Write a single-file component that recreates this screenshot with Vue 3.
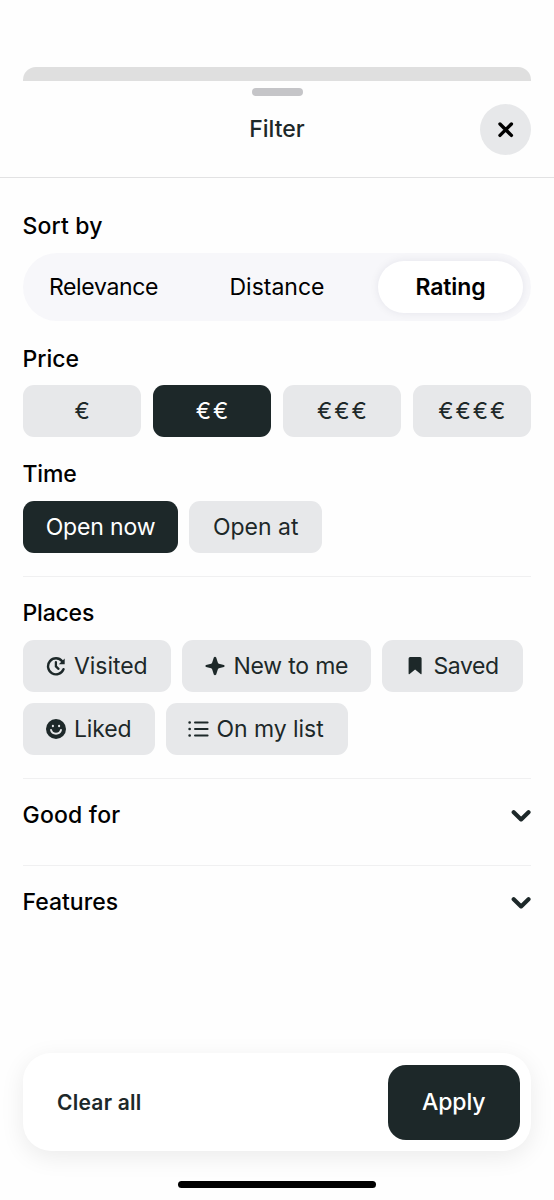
<script setup>
const sorts = [
  { label: 'Relevance', cls: 'relevance' },
  { label: 'Distance', cls: 'distance' },
  { label: 'Rating', cls: 'rating', active: true },
]
const prices = [
  { label: '€' },
  { label: '€€', active: true },
  { label: '€€€' },
  { label: '€€€€' },
]
const times = [
  { label: 'Open now', cls: 'open-now', active: true },
  { label: 'Open at', cls: 'open-at' },
]
const places = [
  { label: 'Visited', icon: 'visited' },
  { label: 'New to me', icon: 'new' },
  { label: 'Saved', icon: 'saved' },
  { label: 'Liked', icon: 'liked' },
  { label: 'On my list', icon: 'list' },
]
const groups = [
  { label: 'Good for', cls: 'good-for' },
  { label: 'Features', cls: 'features' },
]
</script>

<template>
  <div class="screen">
    <div class="behind"></div>
    <header class="header">
      <div class="grabber"></div>
      <div class="bar">
        <h1 class="title">Filter</h1>
        <button class="close" aria-label="Close">
          <svg width="20" height="20" viewBox="0 0 20 20"><path d="M4 4 15.4 15.4M15.4 4 4 15.4" fill="none" stroke="#000" stroke-width="3.4" stroke-linecap="round" /></svg>
        </button>
      </div>
    </header>

    <main class="content">
      <h2 class="heading sort-by"><span>Sort by</span></h2>
      <div class="segmented">
        <button v-for="s in sorts" :key="s.label" class="segment" :class="[s.cls, { active: s.active }]"><span>{{ s.label }}</span></button>
      </div>

      <h2 class="heading price"><span>Price</span></h2>
      <div class="prices">
        <button v-for="p in prices" :key="p.label" class="chip euro" :class="{ active: p.active }"><span>{{ p.label }}</span></button>
      </div>

      <h2 class="heading time"><span>Time</span></h2>
      <div class="chips">
        <button v-for="t in times" :key="t.label" class="chip" :class="[t.cls, { active: t.active }]"><span>{{ t.label }}</span></button>
      </div>

      <section class="places">
        <h2 class="heading"><span>Places</span></h2>
        <div class="chips">
          <button v-for="p in places" :key="p.label" class="chip with-icon" :class="p.icon">
            <svg v-if="p.icon === 'visited'" class="icon" viewBox="0 0 20 20" fill="none" stroke="currentColor">
              <path d="M16.2 5.2A8 8 0 1 0 17.5 13.2" stroke-width="2.4" stroke-linecap="round" />
              <path d="M18.7 2.4v5.8h-5.9z" fill="currentColor" stroke="none" />
              <path d="M9.9 6.2v4.2l2.6 2.4" stroke-width="2.3" stroke-linecap="round" stroke-linejoin="round" />
            </svg>
            <svg v-else-if="p.icon === 'new'" class="icon" viewBox="0 0 20 20" fill="currentColor">
              <path d="M8.8 1.5Q10 -.1 11.2 1.5L12.8 6.6Q13 7.4 13.9 7.7L18.9 9.1Q20.4 10 18.9 10.9L13.9 12.3Q13 12.6 12.8 13.4L11.2 18.5Q10 20.1 8.8 18.5L7.2 13.4Q7 12.6 6.1 12.3L1.1 10.9Q-.4 10 1.1 9.1L6.1 7.7Q7 7.4 7.2 6.6Z" />
            </svg>
            <svg v-else-if="p.icon === 'saved'" class="icon" viewBox="0 0 20 20" fill="currentColor">
              <path d="M3.6 2.5Q3.6 1 5.1 1H15.1Q16.6 1 16.6 2.5V17.6Q16.6 18.8 15.6 18L10.1 13.5 4.6 18Q3.6 18.8 3.6 17.6Z" />
            </svg>
            <svg v-else-if="p.icon === 'liked'" class="icon" viewBox="0 0 20 20">
              <circle cx="10" cy="10" r="10" fill="currentColor" />
              <g fill="none" stroke="#e7e8ea" stroke-linecap="round">
                <path d="M5 10.9C6.1 16 13.9 16 15 10.9" stroke-width="2" />
                <path d="M6.9 6.7v.6M13.1 6.7v.6" stroke-width="2.1" />
              </g>
            </svg>
            <svg v-else class="icon list-icon" viewBox="0 0 21 20" fill="none" stroke="currentColor" stroke-width="2" stroke-linecap="round">
              <path d="M7 3.5H19.6M7 10H19.6M7 16.5H19.6" />
              <path d="M1.6 3.5h.1M1.6 10h.1M1.6 16.5h.1" stroke-width="2.6" />
            </svg>
            <span>{{ p.label }}</span>
          </button>
        </div>
      </section>

      <section v-for="g in groups" :key="g.label" class="group" :class="g.cls">
        <h2 class="heading"><span>{{ g.label }}</span></h2>
        <svg class="chevron" width="20" height="14" viewBox="0 0 20 14"><path d="M2.7 3.2 10.1 10.4 17.5 3.2" fill="none" stroke="#1d2829" stroke-width="4.2" stroke-linecap="round" stroke-linejoin="round" /></svg>
      </section>
    </main>

    <footer class="footer">
      <div class="actions">
        <button class="clear">Clear all</button>
        <button class="apply">Apply</button>
      </div>
      <div class="home"></div>
    </footer>
  </div>
</template>

<style>
body { margin: 0; background: #fff; }
</style>

<style scoped>
* { box-sizing: border-box; }
.screen {
  height: 1200px;
  display: flex;
  flex-direction: column;
  background: #fefefe;
  color: #000;
  font-family: Inter, "Liberation Sans", sans-serif;
  font-size: 23px;
  overflow: hidden;
}
button {
  border: 0;
  padding: 0;
  background: none;
  font: inherit;
  color: inherit;
  white-space: nowrap;
}
.behind {
  flex: none;
  height: 14px;
  margin: 67px 23px 0;
  border-radius: 13px 13px 0 0;
  background: #dfdfdf;
}
.header {
  flex: none;
  height: 97px;
  border-bottom: 1px solid #e2e2e3;
  display: flex;
  flex-direction: column;
  align-items: center;
}
.grabber { margin-top: 7px; width: 51px; height: 7.5px; border-radius: 4px; background: #c5c5c8; }
.bar {
  width: 508px;
  height: 51px;
  margin-top: 8.5px;
  display: grid;
  grid-template-columns: 51px 1fr 51px;
  align-items: center;
}
.title {
  grid-column: 2;
  margin: -2px 0 0;
  text-align: center;
  font-size: 23px;
  font-weight: 500;
  line-height: 30px;
  color: #1d2829;
}
.close {
  width: 51px;
  height: 51px;
  border-radius: 50%;
  background: #e7e8ea;
  display: flex;
  align-items: center;
  justify-content: center;
}
.content { flex: 1; padding: 0 23px; }
.heading {
  margin: 0;
  height: 30px;
  line-height: 30px;
  font-size: 23px;
  font-weight: 500;
}
.heading span { margin-left: -0.5px; }
.heading.sort-by { margin-top: 33px; letter-spacing: 0.15px; }
.segmented {
  height: 68px;
  margin-top: 12px;
  padding: 8px;
  border-radius: 34px;
  background: #f7f7fa;
  display: grid;
  grid-template-columns: 145px 1fr 145px;
}
.relevance { letter-spacing: -0.35px; }
.segment.active {
  background: #fff;
  border-radius: 26px;
  font-weight: 600;
  letter-spacing: -0.1px;
  box-shadow: 0 0 10px rgba(30, 30, 60, 0.08);
}
.heading.price { margin-top: 23px; }
.prices {
  margin-top: 11px;
  display: grid;
  grid-template-columns: repeat(4, 1fr);
  gap: 11.7px;
}
.chip {
  height: 52px;
  border-radius: 11px;
  background: #e7e8ea;
  color: #1d2829;
}
.euro { letter-spacing: 1.9px; }
.euro span { margin-right: -1.9px; }
.chip.active { background: #1d2829; color: #fff; }
.heading.time { margin-top: 22px; letter-spacing: -0.15px; }
.chips { margin-top: 12px; display: flex; flex-wrap: wrap; gap: 11.4px; }
.open-now { width: 155px; letter-spacing: -0.15px; }
.open-at { width: 132.6px; }
.places { margin-top: 23px; height: 202px; border-top: 1px solid #f0f0f1; padding-top: 21px; }
.places .heading { letter-spacing: -0.2px; }
.with-icon { display: flex; align-items: center; padding-left: 22.5px; }
.icon { width: 20px; height: 20px; margin-right: 8.5px; flex: none; }
.list-icon { width: 21px; margin-right: 7.5px; }
.visited { width: 148px; letter-spacing: -0.05px; }
.new { width: 188.6px; letter-spacing: -0.2px; }
.saved { width: 140.5px; letter-spacing: -0.4px; }
.liked { width: 131.6px; letter-spacing: -0.15px; }
.list { width: 181.6px; padding-left: 22px; letter-spacing: -0.05px; }
.liked, .list { margin-top: -0.5px; }
.group {
  height: 87px;
  border-top: 1px solid #f0f0f1;
  padding-top: 21px;
  display: flex;
  justify-content: space-between;
}
.good-for { letter-spacing: 0.2px; }
.chevron { margin: 9px 0.5px 0 0; }
.footer { flex: none; height: 147px; display: flex; flex-direction: column; align-items: center; }
.actions {
  width: 508px;
  height: 98px;
  padding: 0 11.5px 0 34px;
  border-radius: 28px;
  background: #fff;
  box-shadow: 0 6px 24px rgba(0, 0, 0, 0.08);
  display: flex;
  align-items: center;
  justify-content: space-between;
}
.clear { font-size: 21px; font-weight: 600; letter-spacing: 0.25px; color: #1d2829; }
.apply {
  width: 131.5px;
  height: 75px;
  border-radius: 18px;
  background: #1d2829;
  color: #fff;
  font-weight: 500;
  letter-spacing: -0.1px;
}
.home { width: 197.5px; height: 7px; margin-top: 30px; border-radius: 4px; background: #000; }
</style>
